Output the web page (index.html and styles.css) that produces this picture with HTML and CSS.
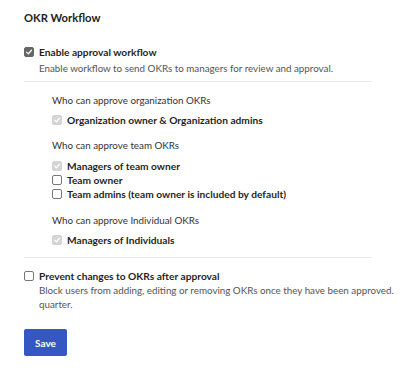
FILE: index.html
```html
<!DOCTYPE html>
<html>
<head>
<meta charset="utf-8">
<link rel="stylesheet" href="styles.css">
</head>
<body>
<div class="page">
  <h1 class="title">OKR Workflow</h1>

  <div class="option">
    <span class="box box-checked"><svg viewBox="0 0 10 10"><path d="M2 5.2 L4.2 7.3 L8 2.8" /></svg></span>
    <div class="option-text">
      <div class="label">Enable approval workflow</div>
      <div class="desc desc-first">Enable workflow to send OKRs to managers for review and approval.</div>
    </div>
  </div>

  <div class="divider"></div>

  <div class="nested">
    <div class="group-title">Who can approve organization OKRs</div>
    <div class="list list-org">
      <div class="row"><span class="box box-disabled"><svg viewBox="0 0 10 10"><path d="M2 5.2 L4.2 7.3 L8 2.8" /></svg></span><span class="label">Organization owner &amp; Organization admins</span></div>
    </div>

    <div class="group-title">Who can approve team OKRs</div>
    <div class="list list-team">
      <div class="row"><span class="box box-disabled"><svg viewBox="0 0 10 10"><path d="M2 5.2 L4.2 7.3 L8 2.8" /></svg></span><span class="label">Managers of team owner</span></div>
      <div class="row"><span class="box"></span><span class="label">Team owner</span></div>
      <div class="row"><span class="box"></span><span class="label">Team admins (team owner is included by default)</span></div>
    </div>

    <div class="group-title">Who can approve Individual OKRs</div>
    <div class="list list-ind">
      <div class="row"><span class="box box-disabled"><svg viewBox="0 0 10 10"><path d="M2 5.2 L4.2 7.3 L8 2.8" /></svg></span><span class="label">Managers of Individuals</span></div>
    </div>
  </div>

  <div class="divider"></div>

  <div class="option option-last">
    <span class="box"></span>
    <div class="option-text">
      <div class="label">Prevent changes to OKRs after approval</div>
      <div class="desc">Block users from adding, editing or removing OKRs once they have been approved.<br>quarter.</div>
    </div>
  </div>

  <button class="save">Save</button>
</div>
</body>
</html>
```

FILE: styles.css
```css
* { box-sizing: border-box; }
html, body { margin: 0; padding: 0; background: #fff; }
body {
  font-family: "Lato", "Noto Sans", sans-serif;
  color: #222;
  font-size: 9.8px;
}
.page {
  width: 400px;
  padding: 9px 24px 0 24px;
}
.title {
  margin: 0 0 18px 0;
  font-size: 11.2px;
  font-weight: 700;
  line-height: 18px;
  color: #222;
}
.option {
  display: flex;
  gap: 5px;
  align-items: flex-start;
}
.option .box { margin-top: 2px; }
.option-text { display: flex; flex-direction: column; }
.label {
  font-size: 10.2px;
  font-weight: 700;
  line-height: 14px;
  color: #1f1f1f;
  white-space: nowrap;
}
.desc {
  color: #555;
  line-height: 14px;
  white-space: nowrap;
}
.desc-first { margin-top: 2px; }
.divider {
  height: 1px;
  background: #ebebeb;
  margin-top: 6px;
  width: 348px;
}
.nested {
  padding: 11px 0 4px 28px;
}
.group-title {
  color: #333;
  line-height: 14px;
}
.list {
  display: flex;
  flex-direction: column;
}
.list-org { margin: 6px 0 11px 0; }
.list-team { margin: 7px 0 12px 0; }
.list-ind { margin: 6px 0 0 0; }
.row {
  display: flex;
  align-items: center;
  gap: 5px;
  height: 14px;
}
.box {
  flex: none;
  width: 10px;
  height: 10px;
  border: 1px solid #777;
  border-radius: 2px;
  background: #fff;
  display: inline-flex;
  align-items: center;
  justify-content: center;
}
.box svg { width: 10px; height: 10px; }
.box path { fill: none; stroke: #fff; stroke-width: 1.6; stroke-linecap: round; stroke-linejoin: round; }
.box-checked { background: #666; border-color: #666; }
.box-disabled { background: #d4d4d4; border-color: #d4d4d4; }
.option-last { margin-top: 11px; }
.save {
  display: block;
  margin-top: 18px;
  width: 43px;
  height: 27px;
  border: none;
  border-radius: 2px;
  background: #3457c4;
  color: #fff;
  font-family: inherit;
  font-weight: 700;
  font-size: 10px;
  padding: 0;
}
```
